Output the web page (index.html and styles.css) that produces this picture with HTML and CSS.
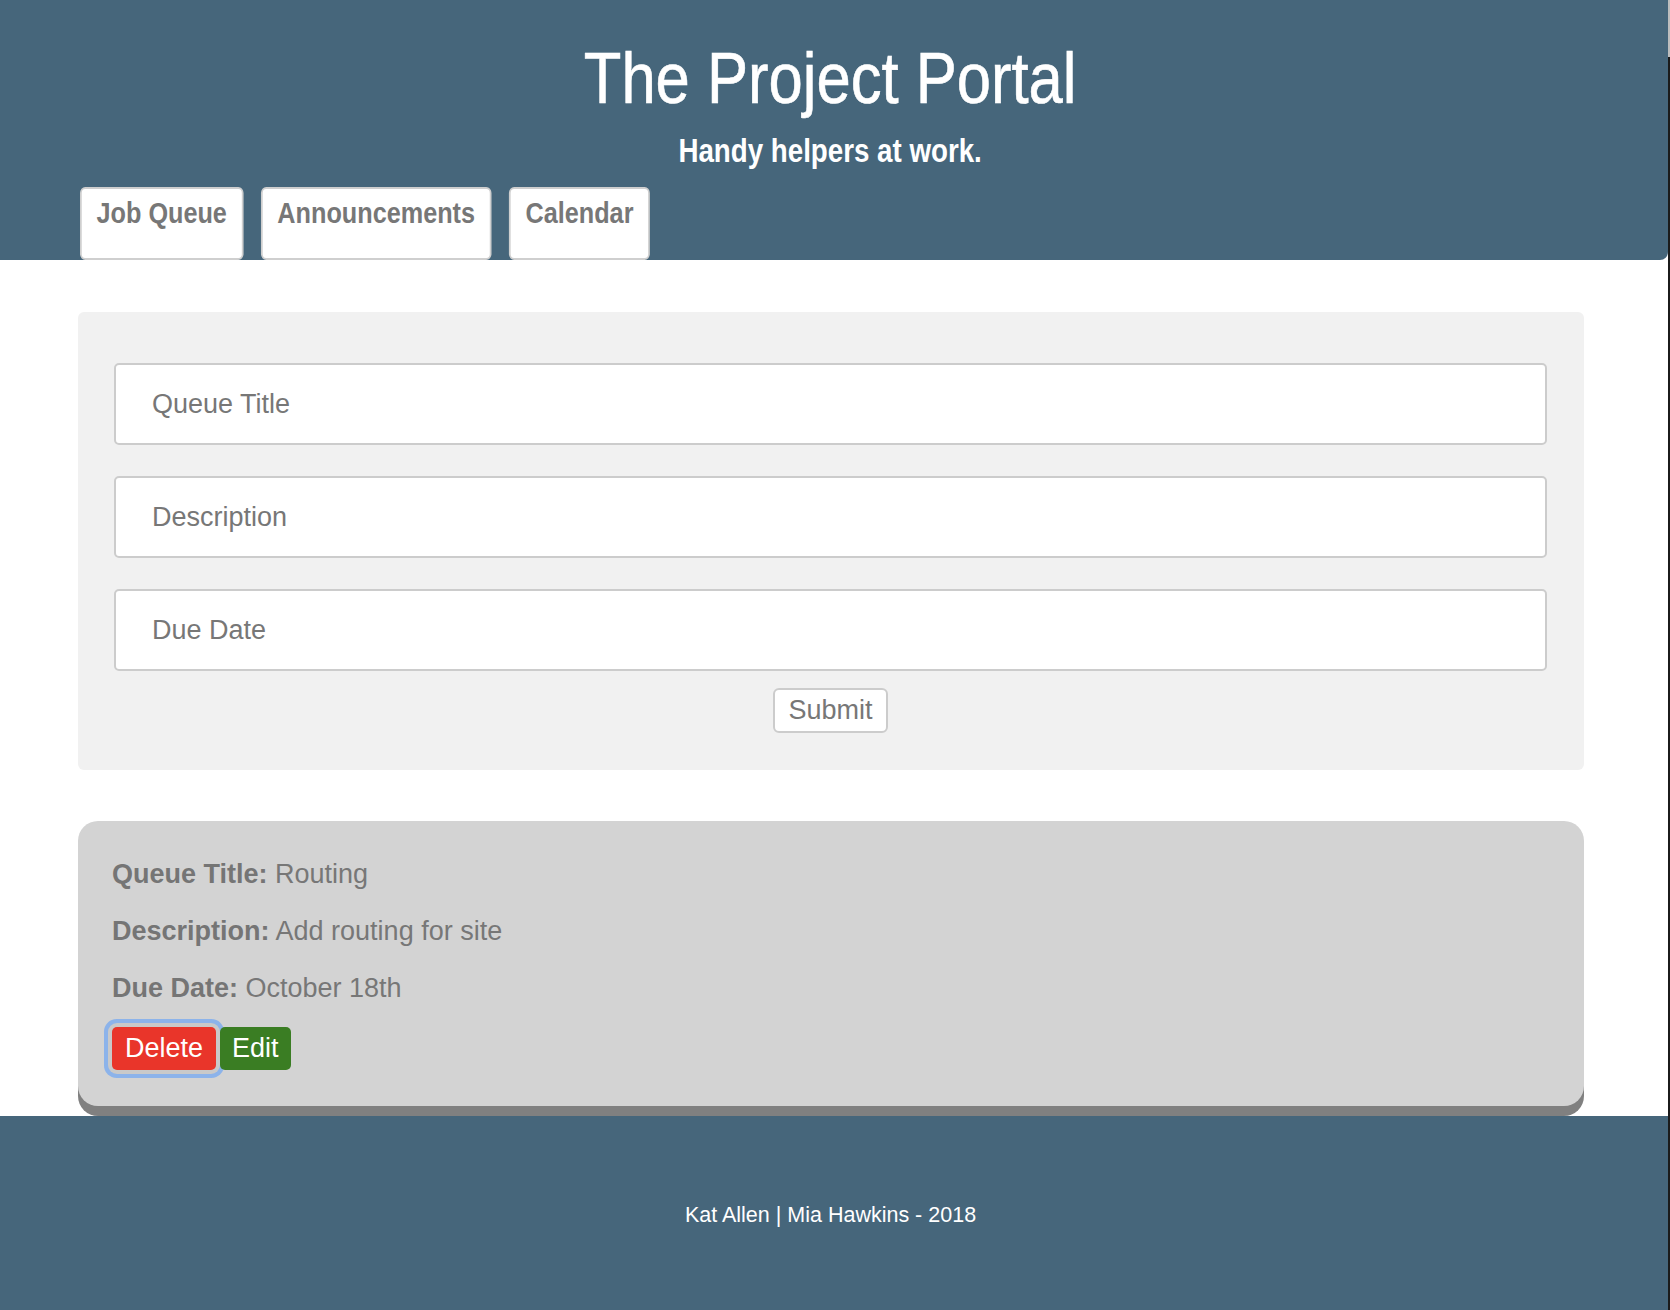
FILE: index.html
```html
<!DOCTYPE html>
<html lang="en">
<head>
<meta charset="utf-8">
<title>The Project Portal</title>
<link rel="stylesheet" href="styles.css">
</head>
<body>
<div class="page">
  <header class="site-header">
    <h1 class="site-title"><span class="narrow narrow-title">The Project Portal</span></h1>
    <h2 class="site-tagline"><span class="narrow narrow-tagline">Handy helpers at work.</span></h2>
    <nav class="tabs">
      <a class="tab" href="#">Job Queue</a>
      <a class="tab" href="#">Announcements</a>
      <a class="tab" href="#">Calendar</a>
    </nav>
  </header>

  <main class="main">
    <form class="queue-form">
      <input class="field" type="text" placeholder="Queue Title">
      <input class="field" type="text" placeholder="Description">
      <input class="field" type="text" placeholder="Due Date">
      <div class="form-actions">
        <button class="submit" type="button">Submit</button>
      </div>
    </form>

    <section class="queue-card">
      <p class="queue-line"><strong>Queue Title:</strong> Routing</p>
      <p class="queue-line"><strong>Description:</strong> Add routing for site</p>
      <p class="queue-line"><strong>Due Date:</strong> October 18th</p>
      <div class="card-actions">
        <button class="btn btn-delete" type="button">Delete</button>
        <button class="btn btn-edit" type="button">Edit</button>
      </div>
    </section>
  </main>

  <footer class="site-footer">
    <p class="credits">Kat Allen | Mia Hawkins - 2018</p>
  </footer>
</div>
<div class="scrollbar"><div class="scrollbar-thumb"></div></div>
</body>
</html>
```

FILE: styles.css
```css
* {
  box-sizing: border-box;
}

html, body {
  margin: 0;
  padding: 0;
  background: #ffffff;
}

body {
  font-family: "Liberation Sans", Arial, Helvetica, sans-serif;
  color: #777777;
}

.page {
  margin-right: 2px;
}

.site-header {
  background: #46667b;
  padding: 42px 8px 0 0;
  height: 260px;
  border-radius: 0 0 8px 0;
  text-align: center;
}

.narrow {
  display: inline-block;
  transform-origin: center;
}

.narrow-title {
  transform: scaleX(0.855);
}

.narrow-tagline {
  transform: scaleX(0.815);
}

.site-title {
  margin: 0;
  font-family: "Liberation Sans", Arial, sans-serif;
  font-weight: 400;
  font-size: 72px;
  line-height: 72px;
  color: #ffffff;
  -webkit-text-stroke: 0.6px #ffffff;
}

.site-tagline {
  margin: 16px 0 17px;
  font-family: "Liberation Sans", Arial, sans-serif;
  font-weight: 700;
  font-size: 34px;
  line-height: 40px;
  color: #ffffff;
}

.tabs {
  display: flex;
  gap: 20px;
  margin-left: 80px;
  text-align: left;
  transform: scaleX(0.87);
  transform-origin: left top;
}

.tab {
  display: block;
  height: 73px;
  padding: 6px 17px 0;
  background: #ffffff;
  border: 2px solid #cfcfcf;
  border-radius: 6px;
  font-family: "Liberation Sans", Arial, sans-serif;
  font-weight: 700;
  font-size: 29px;
  line-height: 36px;
  color: #777777;
  text-decoration: none;
}

.main {
  padding: 52px 84px 0 78px;
}

.queue-form {
  background: #f1f1f1;
  border-radius: 6px;
  padding: 51px 37px 37px 36px;
  display: flex;
  flex-direction: column;
}

.field {
  display: block;
  width: 100%;
  height: 82px;
  margin: 0 0 31px;
  padding: 0 0 0 36px;
  border: 2px solid #cccccc;
  border-radius: 5px;
  background: #ffffff;
  font-family: "Liberation Sans", Arial, Helvetica, sans-serif;
  font-size: 27px;
  color: #555555;
  outline: none;
}

.field:last-of-type {
  margin-bottom: 17px;
}

.field::placeholder {
  color: #777777;
  opacity: 1;
}

.form-actions {
  display: flex;
  justify-content: center;
}

.submit {
  height: 45px;
  padding: 0 13px;
  background: #ffffff;
  border: 2px solid #cccccc;
  border-radius: 6px;
  font-family: "Liberation Sans", Arial, Helvetica, sans-serif;
  font-size: 27px;
  line-height: 39px;
  color: #777777;
}

.queue-card {
  margin: 51px 0 10px;
  background: #d3d3d3;
  border-radius: 20px;
  box-shadow: 0 10px 0 #808080;
  padding: 38px 34px 36px 34px;
  display: flex;
  flex-direction: column;
  gap: 26px;
}

.queue-line {
  margin: 0;
  font-size: 27px;
  line-height: 31px;
  color: #777777;
}

.queue-line strong {
  color: #757575;
}

.card-actions {
  display: flex;
  gap: 4px;
  margin-top: -3px;
}

.btn {
  height: 43px;
  padding: 0 13px;
  border: none;
  border-radius: 5px;
  font-family: "Liberation Sans", Arial, Helvetica, sans-serif;
  font-size: 27px;
  line-height: 43px;
  color: #ffffff;
}

.btn-delete {
  background: #e9352a;
  box-shadow: 0 0 0 4px #c9c9c9, 0 0 0 8px #8cb3ea;
}

.btn-edit {
  background: #3a7d23;
  padding: 0 12px;
}

.site-footer {
  background: #46667b;
  height: 195px;
  padding: 87px 7px 0 0;
  text-align: center;
}

.credits {
  margin: 0;
  font-size: 21.5px;
  line-height: 25px;
  color: #ffffff;
}

.scrollbar {
  position: fixed;
  top: 0;
  right: 0;
  width: 2px;
  height: 100%;
  background: #1b1b1b;
}

.scrollbar-thumb {
  height: 57px;
  background: #bdbdbd;
}
```
